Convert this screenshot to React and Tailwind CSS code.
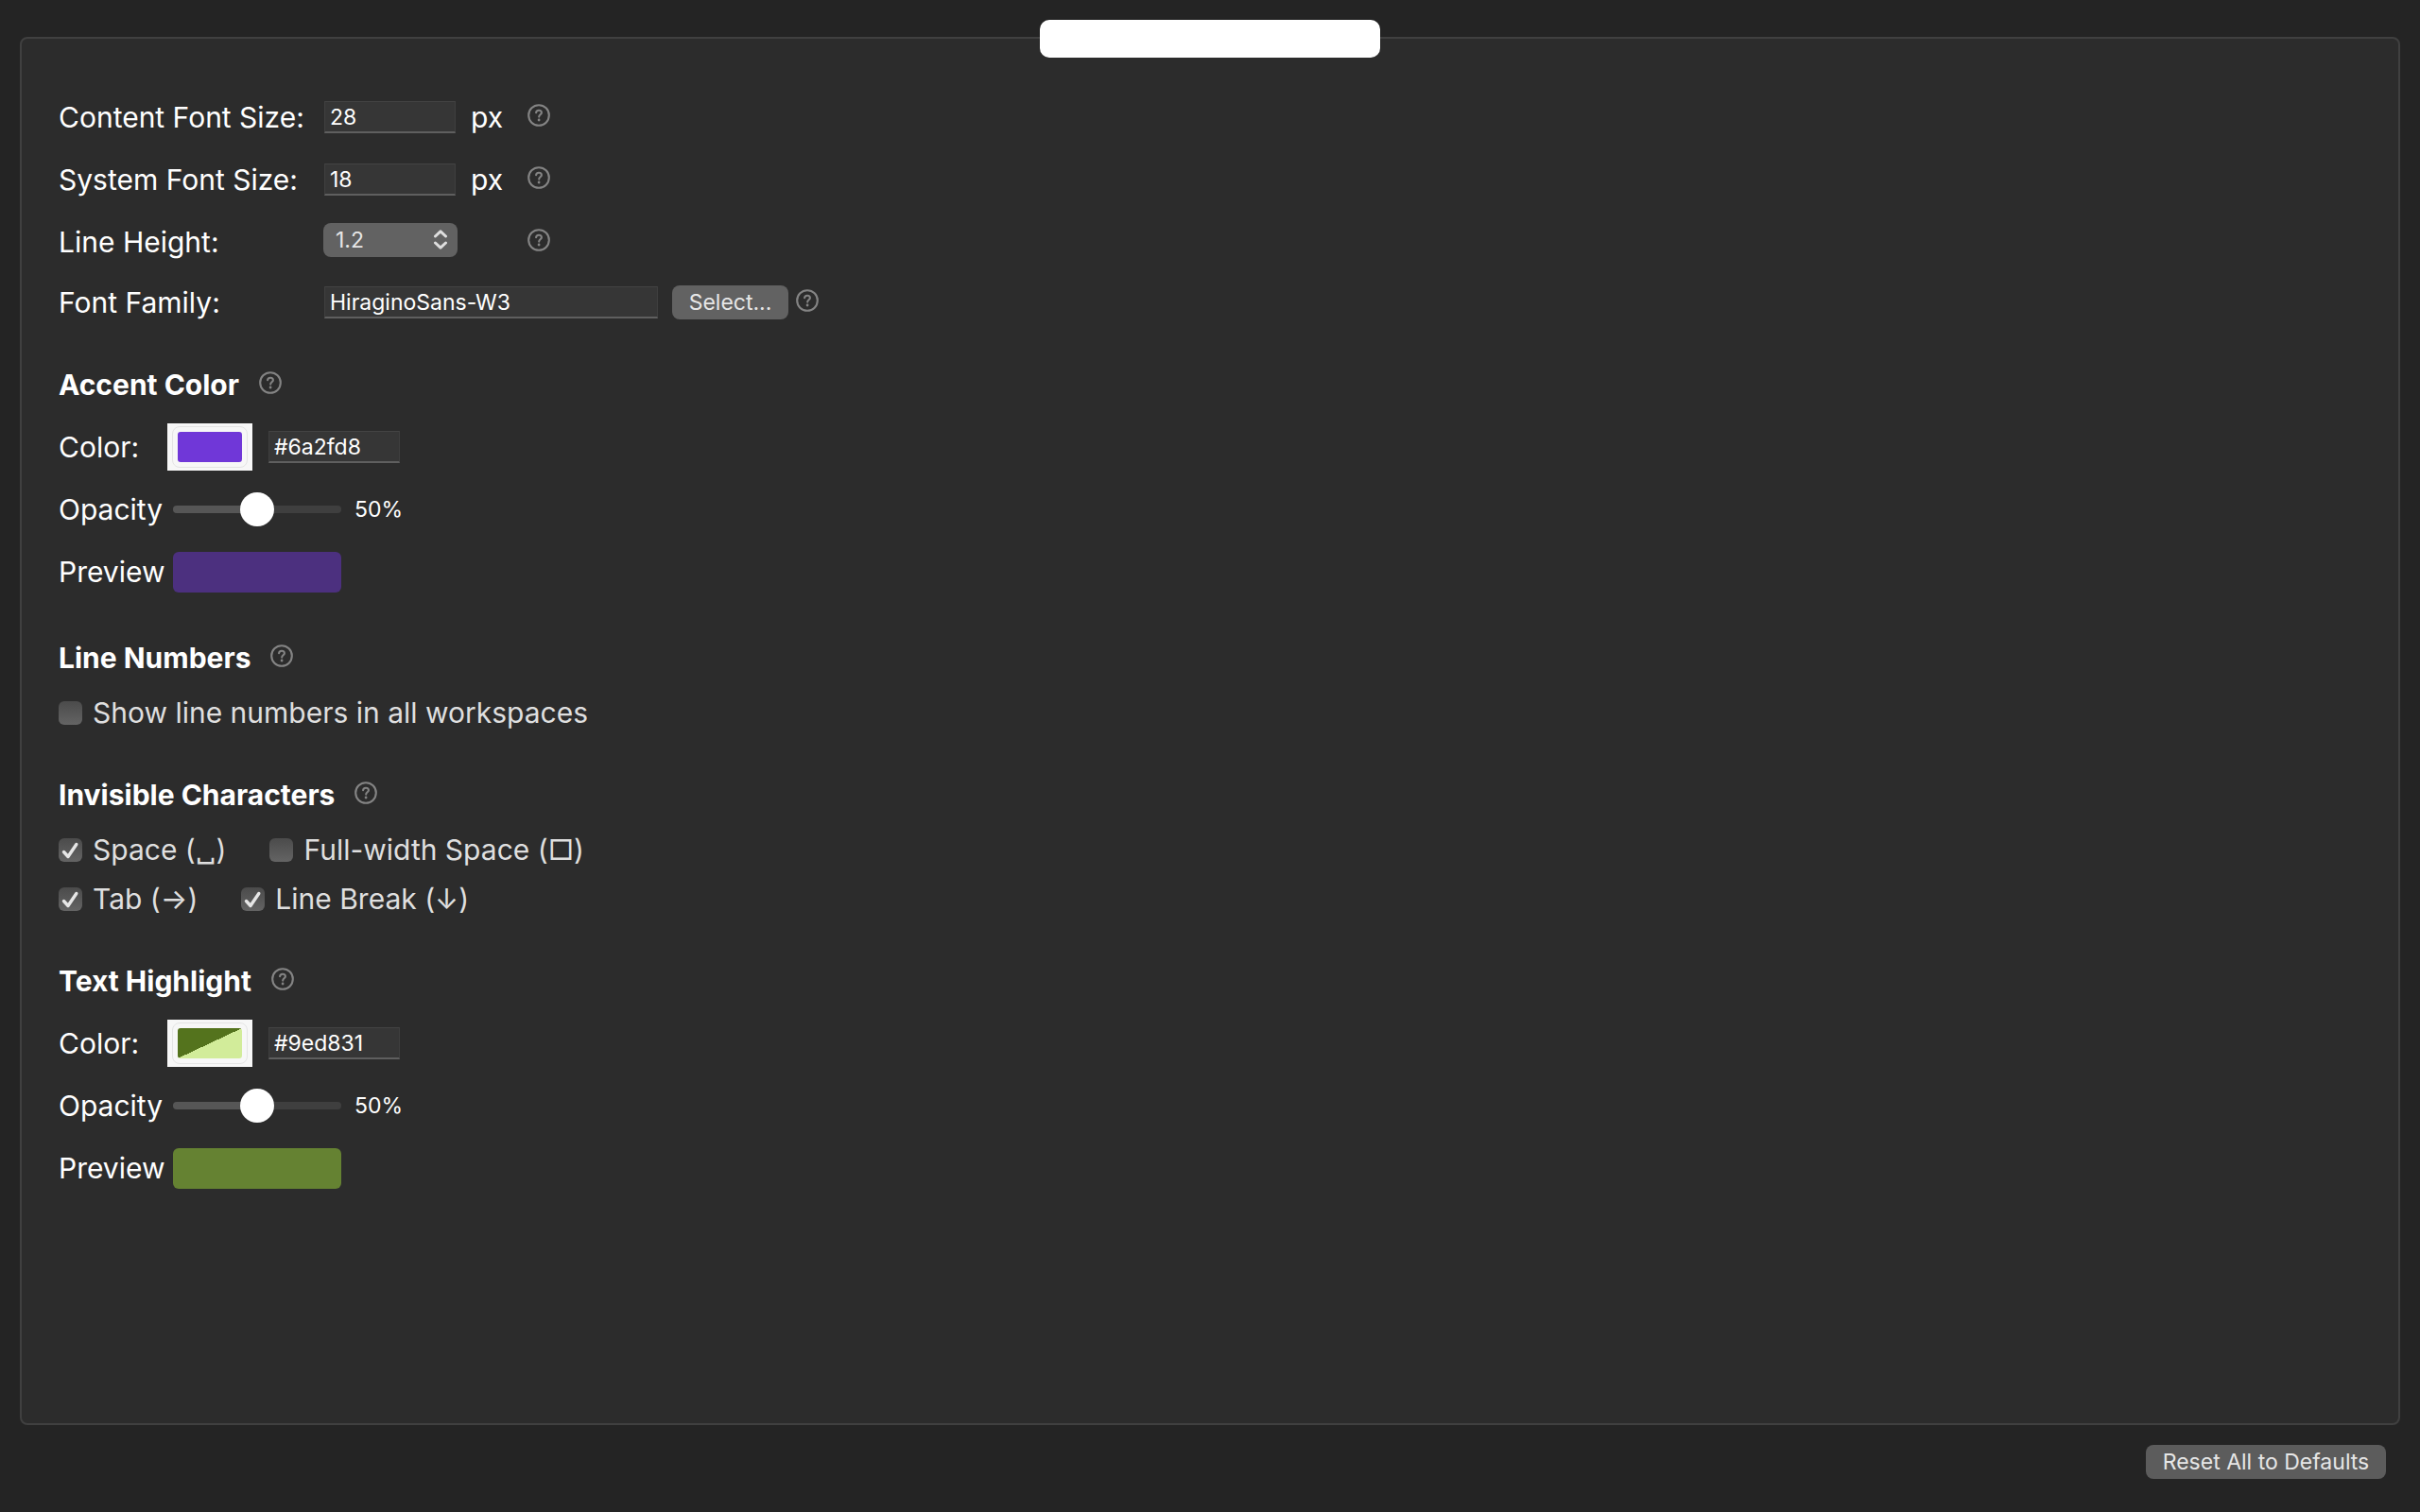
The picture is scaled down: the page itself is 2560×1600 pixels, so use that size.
import { useState } from "react";

const LINE_HEIGHTS = ["1.0", "1.2", "1.4", "1.6", "1.8", "2.0"];

const INPUT_CLASS =
  "h-[34px] border-x border-t border-b-2 border-x-[#3f3f3f] border-t-[#434343] border-b-[#5f5f5f] bg-[#363636] pl-[5px] text-[23px] text-white outline-none";

function Help({ topic }) {
  return (
    <button type="button" aria-label={`Help: ${topic}`} className="mb-1 shrink-0 text-[#848484]">
      <svg viewBox="0 0 24 24" className="size-6" fill="none" stroke="currentColor" strokeLinecap="round">
        <circle cx="12" cy="12" r="10.8" strokeWidth="2.1" />
        <path d="M9.1 9.3c.1-1.7 1.3-2.6 2.9-2.6s2.9 1 2.9 2.5c0 2-2.7 2.2-2.7 4.4" strokeWidth="2.1" />
        <circle cx="12.1" cy="17" r="1.4" fill="currentColor" stroke="none" />
      </svg>
    </button>
  );
}

function Heading({ children }) {
  return (
    <div className="flex h-9 items-center gap-[21px]">
      <h2 className="font-bold">{children}</h2>
      <Help topic={children} />
    </div>
  );
}

function SizeRow({ id, label, value, onChange }) {
  return (
    <div className="flex h-9 items-center">
      <label htmlFor={id} className="w-[281px]">{label}</label>
      <div className="flex w-[215px] items-center gap-4">
        <input
          id={id}
          type="text"
          inputMode="numeric"
          value={value}
          onChange={(e) => onChange(e.target.value)}
          className={`w-[139px] ${INPUT_CLASS}`}
        />
        <span>px</span>
      </div>
      <Help topic={label} />
    </div>
  );
}

function Checkbox({ label, defaultChecked = false }) {
  return (
    <label className="flex h-9 items-center gap-[11px] text-[#dfdfdf]">
      <span className="relative flex">
        <input
          type="checkbox"
          defaultChecked={defaultChecked}
          className="peer size-[25px] appearance-none rounded-[6px] bg-linear-to-b from-[#4b4b4b] to-[#646464]"
        />
        <svg
          viewBox="0 0 25 25"
          className="pointer-events-none absolute inset-0 hidden size-[25px] peer-checked:block"
          fill="none"
          stroke="#e6e6e6"
          strokeWidth="3.4"
          strokeLinecap="round"
          strokeLinejoin="round"
        >
          <path d="M5.5 14.5 10 19.5 18.8 6.5" />
        </svg>
      </span>
      <span>{label}</span>
    </label>
  );
}

function ColorSection({ id, title, initial, preview, swatchClass }) {
  const [color, setColor] = useState(initial);
  const [opacity, setOpacity] = useState(50);

  return (
    <section className="flex flex-col gap-[30px] pb-1">
      <Heading>{title}</Heading>
      <div className="flex h-9 items-center">
        <label htmlFor={`${id}-color`} className="w-[111px] shrink-0">Color:</label>
        <input
          id={`${id}-color`}
          type="color"
          value={color}
          onChange={(e) => setColor(e.target.value)}
          className={`ml-1 h-[50px] w-[90px] shrink-0 appearance-none bg-[#f7f7f7] px-[5px] py-[3px] [&::-webkit-color-swatch]:rounded-[3px] [&::-webkit-color-swatch]:border-0 [&::-webkit-color-swatch-wrapper]:rounded-[8px] [&::-webkit-color-swatch-wrapper]:border [&::-webkit-color-swatch-wrapper]:border-[#e4e4e4] [&::-webkit-color-swatch-wrapper]:p-[5px] ${swatchClass}`}
        />
        <input
          type="text"
          aria-label={`${title} hex value`}
          value={color}
          onChange={(e) => setColor(e.target.value)}
          className={`ml-[17px] w-[139px] ${INPUT_CLASS}`}
        />
      </div>
      <div className="flex h-9 items-center">
        <label htmlFor={`${id}-opacity`} className="w-[111px] shrink-0">Opacity</label>
        <input
          id={`${id}-opacity`}
          type="range"
          min="0"
          max="100"
          value={opacity}
          onChange={(e) => setOpacity(Number(e.target.value))}
          className="ml-[10px] h-2 w-[178px] appearance-none rounded-full [&::-webkit-slider-thumb]:size-9 [&::-webkit-slider-thumb]:appearance-none [&::-webkit-slider-thumb]:rounded-full [&::-webkit-slider-thumb]:bg-white"
          style={{ background: `linear-gradient(to right, #565656 ${opacity}%, #3f3f3f ${opacity}%)` }}
        />
        <output htmlFor={`${id}-opacity`} className="ml-[14px] text-[23px]">{opacity}%</output>
      </div>
      <div className="flex h-9 items-center">
        <span className="w-[111px] shrink-0">Preview</span>
        <div className={`ml-[10px] h-[43px] w-[178px] rounded-[6px] ${preview}`} />
      </div>
    </section>
  );
}

export default function App() {
  const [contentSize, setContentSize] = useState("28");
  const [systemSize, setSystemSize] = useState("18");
  const [family, setFamily] = useState("HiraginoSans-W3");

  return (
    <div className="flex min-h-screen flex-col bg-[#242424] px-[21px] pt-[39px] font-['Inter',sans-serif] text-[30px] leading-9 text-white">
      <main className="relative flex-1 rounded-[8px] border-2 border-[#404040] bg-[#2c2c2c] px-[39px] pt-[65px] pb-10">
        <div
          role="tablist"
          className="absolute -top-5 left-1/2 h-10 w-[360px] -translate-x-1/2 rounded-[10px] bg-white"
        />

        <form className="flex flex-col gap-[51px]" onSubmit={(e) => e.preventDefault()}>
          <section>
            <div className="flex flex-col gap-[30px]">
              <SizeRow id="content-size" label="Content Font Size:" value={contentSize} onChange={setContentSize} />
              <SizeRow id="system-size" label="System Font Size:" value={systemSize} onChange={setSystemSize} />
              <div className="flex h-9 items-center">
                <label htmlFor="line-height" className="w-[280px]">Line Height:</label>
                <div className="relative mb-1 flex w-[216px]">
                  <select
                    id="line-height"
                    defaultValue="1.2"
                    className="h-9 w-[142px] appearance-none rounded-[8px] bg-[#626262] pl-[13px] text-[23px] text-[#e6e6e6]"
                  >
                    {LINE_HEIGHTS.map((h) => (
                      <option key={h}>{h}</option>
                    ))}
                  </select>
                  <svg
                    viewBox="0 0 16 24"
                    className="pointer-events-none absolute top-[6px] left-[116px] h-6 w-4"
                    fill="none"
                    stroke="#dedede"
                    strokeWidth="3"
                    strokeLinecap="round"
                    strokeLinejoin="round"
                  >
                    <path d="M2.5 8 8 2.8 13.5 8M2.5 15 8 20.2 13.5 15" />
                  </svg>
                </div>
                <Help topic="Line Height" />
              </div>
            </div>
            <div className="mt-7 flex h-9 items-center">
              <label htmlFor="font-family" className="w-[281px]">Font Family:</label>
              <input
                id="font-family"
                type="text"
                value={family}
                onChange={(e) => setFamily(e.target.value)}
                className={`w-[353px] ${INPUT_CLASS}`}
              />
              <button
                type="button"
                className="mr-2 ml-[15px] h-9 w-[123px] rounded-[8px] bg-[#626262] text-[23px] text-[#e6e6e6]"
              >
                Select...
              </button>
              <Help topic="Font Family" />
            </div>
          </section>

          <ColorSection
            id="accent"
            title="Accent Color"
            initial="#6a2fd8"
            preview="bg-[#4c307f]"
            swatchClass="[&::-webkit-color-swatch]:bg-[linear-gradient(#7037d8,#7037d8)]"
          />

          <section className="flex flex-col gap-[22px]">
            <Heading>Line Numbers</Heading>
            <Checkbox label="Show line numbers in all workspaces" />
          </section>

          <section className="flex flex-col gap-[22px]">
            <Heading>Invisible Characters</Heading>
            <div className="flex flex-col gap-4">
              <div className="flex gap-[46px]">
                <Checkbox label="Space (␣)" defaultChecked />
                <Checkbox label="Full-width Space (□)" />
              </div>
              <div className="flex gap-[46px]">
                <Checkbox label="Tab (→)" defaultChecked />
                <Checkbox label="Line Break (↓)" defaultChecked />
              </div>
            </div>
          </section>

          <ColorSection
            id="highlight"
            title="Text Highlight"
            initial="#9ed831"
            preview="bg-[#658232]"
            swatchClass="[&::-webkit-color-swatch]:bg-[linear-gradient(to_bottom_right,#54731d_50%,#d2ec9a_50%)]"
          />
        </form>
      </main>

      <footer className="flex h-[92px] items-start justify-end pt-[21px] pr-[15px]">
        <button type="button" className="h-9 w-[254px] rounded-[8px] bg-[#5c5c5c] text-[23px] text-[#e6e6e6]">
          Reset All to Defaults
        </button>
      </footer>
    </div>
  );
}
